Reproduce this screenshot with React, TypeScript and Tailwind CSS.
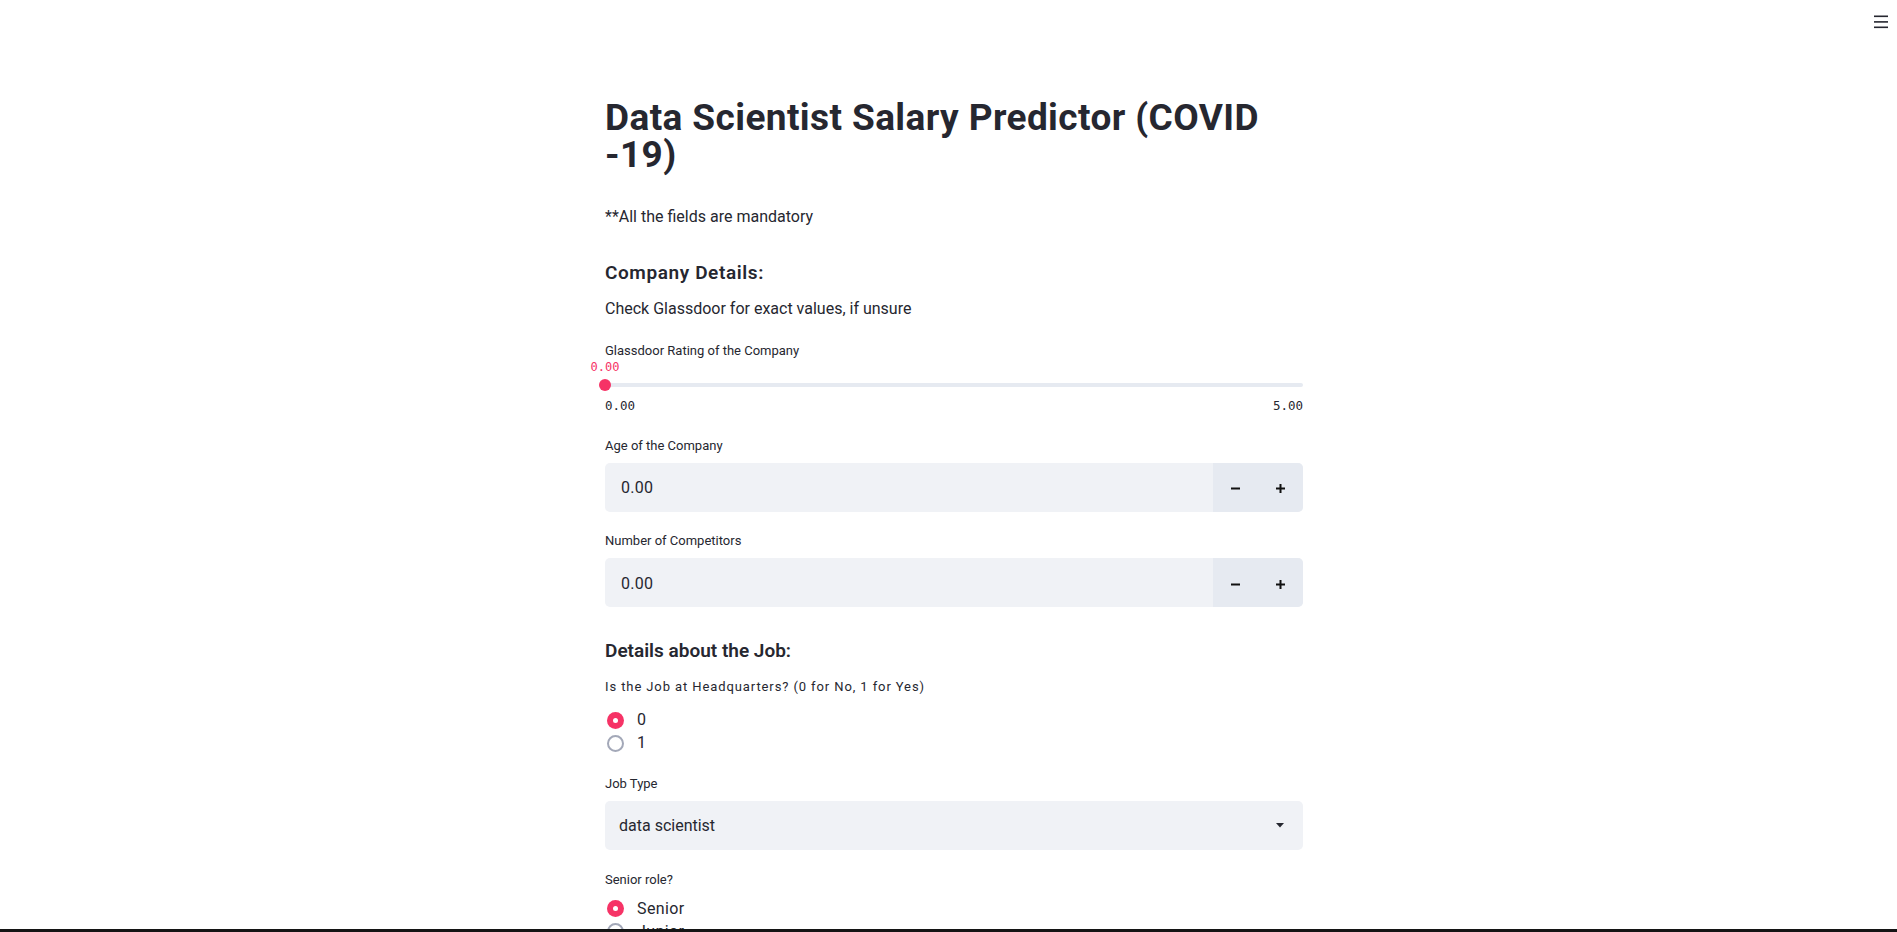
import React from "react";

function Label({ children, mt, extra = "" }: { children: React.ReactNode; mt: string; extra?: string }) {
  return <div className={`${mt} ${extra} h-[20px] text-[13px] leading-[20px]`}>{children}</div>;
}

function NumberInput({ label, mt }: { label: string; mt: string }) {
  return (
    <>
      <Label mt={mt}>{label}</Label>
      <div className="mt-[7px] flex h-[49px] overflow-hidden rounded-[5px] bg-[#f0f2f6]">
        <div className="flex flex-1 items-center pl-[16px] pt-[2px] text-[16px] tracking-[0.3px]">0.00</div>
        <div className="flex w-[90px] bg-[#e6eaf1]">
          <div className="flex w-[45px] items-center justify-center pt-[3px]">
            <svg width="9" height="9" viewBox="0 0 9 9">
              <rect x="0" y="3.5" width="9" height="2" fill="#111" />
            </svg>
          </div>
          <div className="flex w-[45px] items-center justify-center pt-[3px]">
            <svg width="9" height="9" viewBox="0 0 9 9">
              <rect x="0" y="3.5" width="9" height="2" fill="#111" />
              <rect x="3.5" y="0" width="2" height="9" fill="#111" />
            </svg>
          </div>
        </div>
      </div>
    </>
  );
}

function Radio({ label, checked, mt = "" }: { label: string; checked?: boolean; mt?: string }) {
  return (
    <div className={`${mt} flex h-[22px] items-center`}>
      {checked ? (
        <span className="ml-[2px] flex h-[17px] w-[17px] items-center justify-center rounded-full bg-[#f63366]">
          <span className="h-[5px] w-[5px] rounded-full bg-white" />
        </span>
      ) : (
        <span className="ml-[2px] h-[17px] w-[17px] rounded-full border-2 border-[#a3a8b8] bg-white" />
      )}
      <span className="ml-[13px] text-[16px] leading-[22px] tracking-[0.4px]">{label}</span>
    </div>
  );
}

export default function App() {
  return (
    <div className="relative min-h-screen bg-white text-[#262730] [font-family:Roboto,'Liberation_Sans',sans-serif]">
      <div className="absolute right-[9px] top-[15px]">
        <svg width="14" height="14" viewBox="0 0 14 14">
          <rect x="0" y="0.5" width="14" height="1.6" fill="#262730" />
          <rect x="0" y="6.1" width="14" height="1.6" fill="#262730" />
          <rect x="0" y="11.5" width="14" height="1.6" fill="#262730" />
        </svg>
      </div>

      <div className="flex justify-center pl-[11px]">
        <div className="w-[698px] pt-[99px] pb-[60px]">
          <h1 className="text-[37px] font-bold leading-[37px] tracking-[0.4px]">
            Data Scientist Salary Predictor (COVID
            <br />
            -19)
          </h1>

          <p className="mt-[31.7px] h-[24px] text-[16px] leading-[24px]">**All the fields are mandatory</p>

          <h3 className="mt-[30.3px] h-[28px] text-[19px] font-semibold leading-[28px] tracking-[0.6px]">Company Details:</h3>
          <p className="mt-[10px] h-[24px] text-[16px] leading-[24px]">Check Glassdoor for exact values, if unsure</p>

          <Label mt="mt-[19.7px]">Glassdoor Rating of the Company</Label>
          <div className="-ml-[15px] h-[12px] w-[30px] text-center text-[12px] leading-[12px] text-[#f63366] [font-family:'DejaVu_Sans_Mono',monospace]">
            0.00
          </div>
          <div className="relative mt-[4.7px] flex h-[16px] items-center">
            <div className="h-[4px] w-full rounded-full bg-[#e6eaf1]" />
            <div className="absolute left-[-6px] top-[2px] h-[12px] w-[12px] rounded-full bg-[#f63366]" />
          </div>
          <div className="mt-[5px] flex h-[16px] items-center justify-between text-[12.5px] leading-[16px] [font-family:'DejaVu_Sans_Mono',monospace]">
            <span>0.00</span>
            <span>5.00</span>
          </div>

          <NumberInput label="Age of the Company" mt="mt-[21.3px]" />
          <NumberInput label="Number of Competitors" mt="mt-[19.7px]" />

          <h3 className="mt-[30px] h-[28px] text-[19px] font-semibold leading-[28px]">Details about the Job:</h3>
          <Label mt="mt-[12px]" extra="tracking-[0.9px]">Is the Job at Headquarters? (0 for No, 1 for Yes)</Label>
          <Radio label="0" checked mt="mt-[12px]" />
          <Radio label="1" mt="mt-[1px]" />

          <Label mt="mt-[19.3px]">Job Type</Label>
          <div className="mt-[7.7px] flex h-[49px] items-center justify-between rounded-[5px] bg-[#f0f2f6] pl-[14px] pr-[19px] text-[16px]">
            <span>data scientist</span>
            <svg width="8" height="5" viewBox="0 0 8 5">
              <path d="M0 0 L8 0 L4 4.5 Z" fill="#262730" />
            </svg>
          </div>

          <Label mt="mt-[19.7px]">Senior role?</Label>
          <Radio label="Senior" checked mt="mt-[7.6px]" />
          <Radio label="Junior" mt="mt-[1px]" />
        </div>
      </div>

      <div className="fixed bottom-0 left-0 right-0 h-[3px] bg-[#141414]" />
    </div>
  );
}
